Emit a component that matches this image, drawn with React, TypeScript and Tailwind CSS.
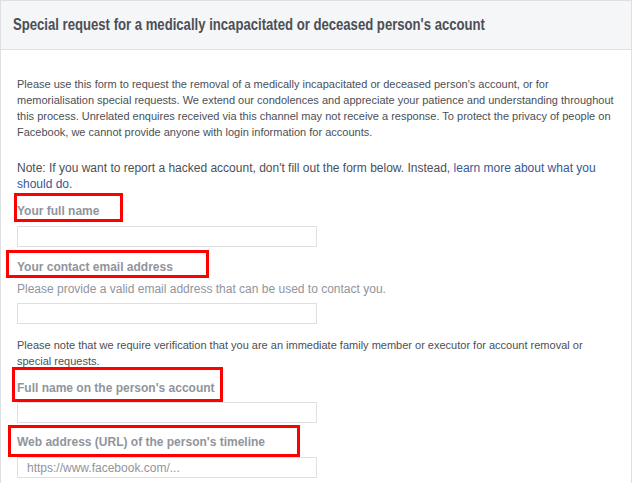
const inputCls =
  "block w-[300px] h-[21px] border border-[#dddfe2] bg-white px-[9px] text-[12px] text-[#1d2129] outline-none placeholder:text-[#90949c]";

const Label = ({
  text,
  box,
}: {
  text: string;
  box: string;
}) => (
  <div className="relative h-4 text-[12px] font-bold leading-4 text-[#90949c]">
    {text}
    <span className={`pointer-events-none absolute border-[3px] border-[#ff0000] ${box}`} />
  </div>
);

const App = () => {
  return (
    <div className="min-h-[483px] bg-white font-['Liberation_Sans',Arial,sans-serif]">
      <div className="w-[632px] min-h-[483px] border border-b-0 border-[#dddfe2]">
        <div className="h-[49px] overflow-hidden border-b border-[#dddfe2] bg-[#f5f6f7] pl-[12px] pt-[14px]">
          <h1 className="origin-left scale-x-[0.82] whitespace-nowrap text-[16px] font-bold leading-5 text-[#4b4f56]">
            Special request for a medically incapacitated or deceased person's account
          </h1>
        </div>
        <div className="px-4 pt-[26px]">
          <p className="text-[11px] leading-4 text-[#4b4f56]">
            Please use this form to request the removal of a medically incapacitated or
            deceased person's account, or for memorialisation special requests. We extend our
            condolences and appreciate your patience and understanding throughout this process.
            Unrelated enquires received via this channel may not receive a response. To protect
            the privacy of people on Facebook, we cannot provide anyone with login information
            for accounts.
          </p>
          <p className="mt-5 w-[590px] text-[12px] leading-4 text-[#4b4f56]">
            <span>
              Note: If you want to report a hacked account, don't fill out the form below. Instead,{" "}
            </span>
            <span className="text-[#365899]">learn more about what you</span>{" "}
            <span>
              <span className="text-[#365899]">should do</span>.
            </span>
          </p>

          <div className="mt-[11px]">
            <Label text="Your full name" box="-left-[3px] -top-[10px] w-[109px] h-[29px]" />
            <input className={`${inputCls} mt-[7px]`} />
          </div>

          <div className="mt-3">
            <Label
              text="Your contact email address"
              box="-left-[11px] -top-[9px] w-[203px] h-[28px]"
            />
            <div className="mt-[6px] text-[12px] leading-4 text-[#90949c]">
              Please provide a valid email address that can be used to contact you.
            </div>
            <input className={`${inputCls} mt-[6px]`} />
          </div>

          <p className="mt-[13px] text-[11px] leading-4 text-[#4b4f56]">
            Please note that we require verification that you are an immediate family member or
            executor for account removal or special requests.
          </p>

          <div className="mt-[11px]">
            <Label
              text="Full name on the person's account"
              box="-left-[5px] -top-[13px] w-[211px] h-[35px]"
            />
            <input className={`${inputCls} mt-[6px]`} />
          </div>

          <div className="mt-[11px]">
            <Label
              text="Web address (URL) of the person's timeline"
              box="-left-[9px] -top-[9px] w-[292px] h-[32px]"
            />
            <input className={`${inputCls} mt-[7px]`} placeholder="https://www.facebook.com/..." />
          </div>
        </div>
      </div>
    </div>
  );
};

export default App;
